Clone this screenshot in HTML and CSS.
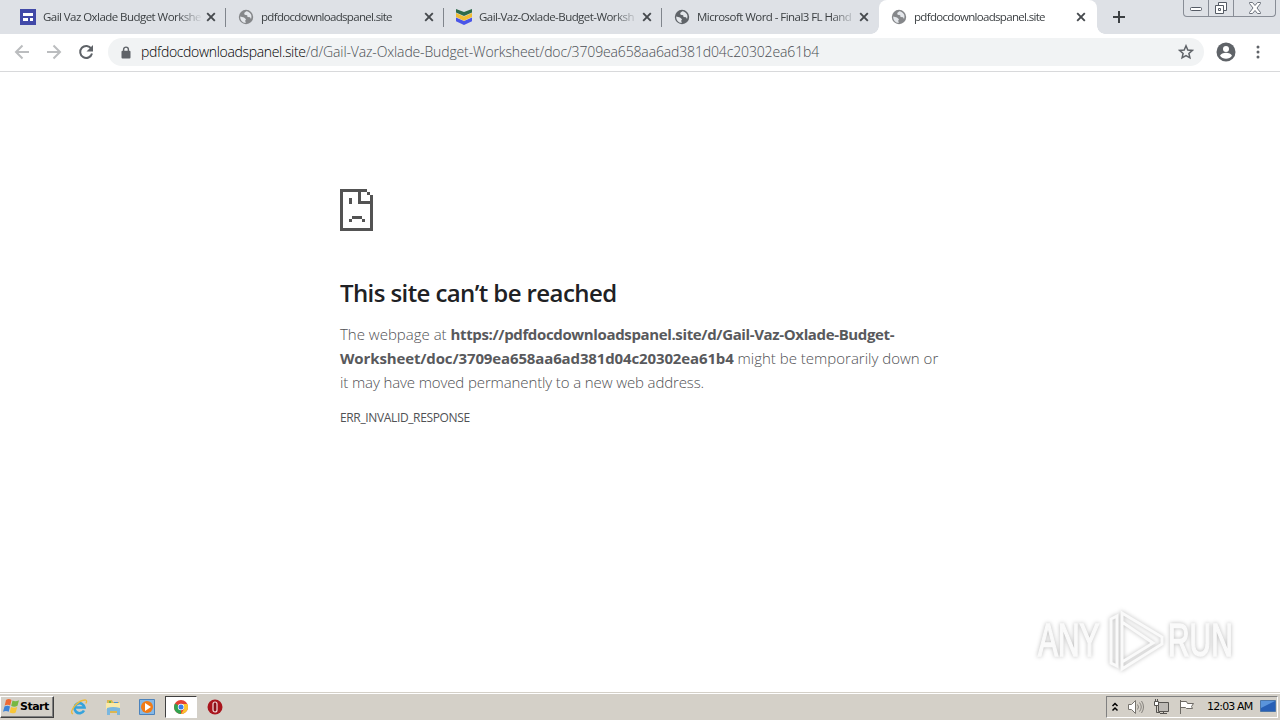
FILE: index.html
```
<!DOCTYPE html>
<html lang="en">
  <head>
    <meta charset="UTF-8">
    <title>pdfdocdownloadspanel.site</title>
    <link rel="stylesheet" href="styles.css">
  </head>
  <body>
    <svg class="defs" width="0" height="0">
      <symbol id="globe" viewBox="0 0 16 16">
        <circle cx="8" cy="8" r="7.200" fill="currentColor"/>
        <path d="M2.200 7.600 6 8.600l2 1.700-.8 1.500.6 2.200C4.300 14 2 11 2.200 7.600zM8.300 2.200 6.200 4l.4 1.700 2.600.5.3 1.800 2.500.3 1 1.700c1.600-3.800-.7-7.300-4.700-7.800z" fill="#e4e7eb"/>
      </symbol>
      <symbol id="close" viewBox="0 0 10 10">
        <path d="M1.200 1.200l7.600 7.600M8.800 1.200L1.200 8.800" fill="none" stroke="currentColor" stroke-width="1.900"/>
      </symbol>
    </svg>

    <header class="tab-strip">
      <div class="tab">
        <svg class="favicon" viewBox="0 0 16 16"><path fill="#4149a8" d="M0 0h16v16H0z"/><path fill="#fff" d="M3 4h10v3H3zM3 9h5v3H3zM10 9h3v3h-3z"/></svg>
        <span class="tab-title">Gail Vaz Oxlade Budget Workshe</span>
        <svg class="close"><use href="#close"/></svg>
      </div>
      <div class="tab">
        <svg class="favicon light"><use href="#globe"/></svg>
        <span class="tab-title site">pdfdocdownloadspanel.site</span>
        <svg class="close"><use href="#close"/></svg>
      </div>
      <div class="tab">
        <svg class="favicon" viewBox="0 0 16 16"><path fill="#4a55e8" d="M0 8.500l8 3.500 8-3.500v3.800L8 16l-8-3.700z"/><path fill="#f0bd35" d="M0 4l8 3.500L16 4v4l-8 3.700L0 8z"/><path fill="#2d6b4a" d="M0 0l8 3 8-3v3.500L8 7 0 3.500z"/></svg>
        <span class="tab-title">Gail-Vaz-Oxlade-Budget-Worksh</span>
        <svg class="close"><use href="#close"/></svg>
      </div>
      <div class="tab last">
        <svg class="favicon"><use href="#globe"/></svg>
        <span class="tab-title">Microsoft Word - Final3 FL Hand</span>
        <svg class="close"><use href="#close"/></svg>
      </div>
      <div class="tab active">
        <svg class="favicon light"><use href="#globe"/></svg>
        <span class="tab-title site">pdfdocdownloadspanel.site</span>
        <svg class="close"><use href="#close"/></svg>
      </div>
      <svg class="new-tab" viewBox="0 0 12 12"><path d="M6 0v12M0 6h12" stroke="#3c4043" stroke-width="2"/></svg>
      <div class="window-buttons">
        <span><svg width="14" height="8" viewBox="0 0 14 8"><rect x="1.500" y="3.500" width="11" height="3" rx="1" fill="#fff" stroke="#555b65"/></svg></span>
        <span><svg width="14" height="14" viewBox="0 0 14 14"><path d="M4.500 1.500h8v8h-8z" fill="#fff" stroke="#555b65"/><path d="M1.500 4.500h8v8h-8z" fill="#fff" stroke="#555b65"/><path d="M4.500 7.500h2v2h-2z" fill="none" stroke="#555b65"/></svg></span>
        <span class="wide"><svg width="12" height="12" viewBox="0 0 12 12"><path d="M.5.500h3L6 3.500 8.500.500h3v1L8 6l3.500 4.500v1h-3L6 8.500 3.500 11.500h-3v-1L4 6 .500 1.500z" fill="#fff" stroke="#6d737d"/></svg></span>
      </div>
    </header>

    <nav class="toolbar">
      <svg class="nav-icon dim" viewBox="0 0 16 16"><path d="M15 8H2.500M8.500 1.500L2 8l6.500 6.500"/></svg>
      <svg class="nav-icon dim" viewBox="0 0 16 16"><path d="M1 8h12.500M7.500 1.500L14 8l-6.500 6.500"/></svg>
      <svg class="nav-icon" viewBox="0 0 16 16"><path d="M13.300 4.800A6 6 0 1 0 14 9.500"/><path d="M15 1v6.500H8.500z" class="solid"/></svg>
      <div class="omnibox">
        <svg class="lock" viewBox="0 0 10 13"><path d="M2.600 6V3.500a2.400 2.400 0 0 1 4.800 0V6" fill="none" stroke="#5f6368" stroke-width="1.400"/><rect x=".5" y="4.800" width="9" height="7.700" rx="1" fill="#5f6368"/></svg>
        <span class="url"><b>pdfdocdownloadspanel.site</b>/d/Gail-Vaz-Oxlade-Budget-Worksheet/doc/3709ea658aa6ad381d04c20302ea61b4</span>
        <svg class="star" viewBox="0 0 16 16"><path d="M8 1.800l1.800 4.200 4.500.4-3.400 3 1 4.400L8 11.500l-3.900 2.300 1-4.400-3.400-3L6.200 6z" fill="none" stroke="#5f6368" stroke-width="1.500"/></svg>
      </div>
      <svg class="avatar" viewBox="0 0 20 20"><circle cx="10" cy="10" r="9.500" fill="#5f6368"/><circle cx="10" cy="7" r="3" fill="#fff"/><path d="M4 13.800c1.500-4 10.500-4 12 0-2.500 4-9.500 4-12 0z" fill="#fff"/></svg>
      <svg class="menu" viewBox="0 0 4 14"><circle cx="2" cy="2" r="1.500"/><circle cx="2" cy="7" r="1.500"/><circle cx="2" cy="12" r="1.500"/></svg>
    </nav>

    <main class="error-page">
      <svg class="sad-page" viewBox="0 0 33 42" shape-rendering="crispEdges">
        <path fill="#535353" d="M0 0h27v3H3v36h27V15H18V3h3v9h9V6h3v36H0zM27 3h3v3h-3zM9 9h3v6H9zM12 27h10v3H12zM9 30h3v3H9zM22 30h3v3h-3z"/>
      </svg>
      <h1>This site can’t be reached</h1>
      <p class="summary">
        <span class="line line-a">The webpage at <b>https://pdfdocdownloadspanel.site/d/Gail-Vaz-Oxlade-Budget-</b></span>
        <span class="line line-b"><b>Worksheet/doc/3709ea658aa6ad381d04c20302ea61b4</b> might be temporarily down or</span>
        <span class="line line-c">it may have moved permanently to a new web address.</span>
      </p>
      <p class="error-code">ERR_INVALID_RESPONSE</p>
    </main>

    <div class="watermark">
      <span>ANY</span>
      <svg viewBox="0 0 58 62"><path d="M15 3l40 24v7L15 59v-7l31-19L15 12zM15 3v49M4 9l6-3v50l-6-3z"/></svg>
      <span>RUN</span>
    </div>

    <footer class="taskbar">
      <div class="start">
        <svg width="17" height="17" viewBox="0 0 17 17"><path fill="#ee6a35" d="M3 2c2-1.500 4-1 5.500 0L7.200 7.500C5.500 6.300 3.500 6.500 1.700 7.500z"/><path fill="#77b843" d="M9.500 2.500c2 1 4 1 6.500-.3l-1.500 5.500c-2 1.200-4.300 1.200-6.300.2z"/><path fill="#3c83d8" d="M1.500 8.500c2-1 4-1 5.500 0l-1.300 5.300C4 12.800 2 12.800 0 13.800z"/><path fill="#f8c638" d="M8 9c2 1 4 1 6.200 0l-1.500 5.400c-2 1.100-4 1.100-6 .1z"/></svg>
        <span>Start</span>
      </div>
      <div class="launcher"><svg width="18" height="18" viewBox="0 0 18 18"><path d="M14 12.500A5 5 0 1 1 14.500 9.500H5" fill="none" stroke="#35a3dc" stroke-width="2.600"/><path d="M3 16C-2 14 8 2 15 2c2.500 0 1.500 2.500.8 3.500" fill="none" stroke="#edbb3c" stroke-width="1.300"/></svg></div>
      <div class="launcher"><svg width="18" height="18" viewBox="0 0 18 18"><path fill="#dcb651" d="M3 2h5l1 2h6v11H3z"/><path fill="#fae9a6" d="M2 5h14v6H2z"/><path fill="#69b648" d="M5 3h2v2H5z"/><path fill="#4d91d0" d="M10 4h4v1h-4z"/><path fill="#7ab7df" d="M3 10q6-2 13 0v7h-3v-4H6v4H3z"/></svg></div>
      <div class="launcher"><svg width="18" height="18" viewBox="0 0 18 18"><path fill="#85b8e6" stroke="#4c83bc" d="M1.500 1.500h15v15h-15z"/><circle cx="9" cy="9" r="6" fill="#f17b16"/><path fill="#fff" d="M7 5l6 4-6 4z"/></svg></div>
      <div class="launcher pressed"><svg width="14" height="14" viewBox="0 0 14 14"><circle cx="7" cy="7" r="7" fill="#e34133"/><path fill="#31a350" d="M1 3.500L7 7v7A7 7 0 0 1 1 3.500z"/><path fill="#fbc42d" d="M7 4h6.300A7 7 0 0 1 7 14l3-5z"/><circle cx="7" cy="7" r="3.200" fill="#fff"/><circle cx="7" cy="7" r="2.500" fill="#397be8"/></svg></div>
      <div class="launcher"><svg width="16" height="16" viewBox="0 0 16 16"><circle cx="8" cy="8" r="7.500" fill="#a9151d"/><rect x="6" y="3" width="4" height="10" rx="2" fill="#8a1018" stroke="#f4dcdc" stroke-width="1.200"/></svg></div>
      <div class="tray">
        <svg width="8" height="10" viewBox="0 0 8 10"><path d="M1.500 4L4 1.500 6.500 4M1.500 8.500L4 6l2.500 2.500" fill="none" stroke="#000" stroke-width="1.500"/></svg>
        <svg width="18" height="16" viewBox="0 0 18 16"><path d="M1.500 5.500h3l4-4v13l-4-4h-3z" fill="#fff" stroke="#77746e"/><path d="M10.500 5.500q2 2.500 0 5M12.500 3.500q3.500 4.500 0 9M14.500 2q4 6 0 12" fill="none" stroke="#85827c"/></svg>
        <svg width="17" height="16" viewBox="0 0 17 16"><path d="M5.500 3.500h10v9h-10z" fill="#bdbab5" stroke="#55534f"/><path d="M7 14.500h7M10.500 13v2M3.500 7v6.500H7" fill="none" stroke="#55534f"/><path d="M1.500 2.500h4v4h-4zM2.500 0v2M4.500 0v2" fill="#fff" stroke="#55534f"/></svg>
        <svg width="17" height="16" viewBox="0 0 17 16"><path d="M2.500 1v14M2.500 2.500h6l1 2h6l-2 3 1 2H8.500l-1-1h-5z" fill="#fff" stroke="#6d6a65"/></svg>
        <span class="clock">12:03 AM</span>
        <svg class="desktop" width="16" height="13" viewBox="0 0 16 13"><path d="M.5.500h15v11H.5z" fill="#2860b6" stroke="#4c76a8"/><path d="M1 1h14L1 8z" fill="#5a94db"/></svg>
      </div>
    </footer>
  </body>
</html>
```
FILE: styles.css
```
* {
  box-sizing: border-box;
}

body {
  margin: 0;
  width: 1280px;
  height: 720px;
  display: flex;
  flex-direction: column;
  overflow: hidden;
  background-color: #fff;
  font-family: "Open Sans", "Noto Sans", sans-serif;
}

svg {
  display: block;
  flex: none;
}

.defs {
  position: absolute;
}

.tab-strip {
  display: flex;
  height: 34px;
  padding-left: 8px;
  background-color: #dee1e6;
}

.tab {
  display: flex;
  align-items: center;
  width: 218px;
  height: 34px;
  padding: 0 10px 0 12px;
  color: #5f6368;
  background: linear-gradient(#80858c, #80858c) right 8px / 1px 19px no-repeat;
}

.tab.last {
  width: 217px;
  background: none;
}

.tab.active {
  position: relative;
  background: #fff;
  border-radius: 8px 8px 0 0;
}

/* curved feet of the selected tab */
.tab.active::before,
.tab.active::after {
  content: "";
  position: absolute;
  bottom: 0;
  width: 8px;
  height: 8px;
}

.tab.active::before {
  left: -8px;
  background: radial-gradient(circle at 0 0, #dee1e6 7.5px, #fff 8px);
}

.tab.active::after {
  right: -8px;
  background: radial-gradient(circle at 100% 0, #dee1e6 7.5px, #fff 8px);
}

.favicon {
  width: 16px;
  height: 16px;
  margin-right: 7px;
}

.favicon.light {
  color: #85878a;
}

.tab-title {
  width: 158px;
  white-space: nowrap;
  font-size: 11.5px;
  line-height: 18px;
  letter-spacing: -0.55px;
  color: #3c4043;
  -webkit-mask-image: linear-gradient(90deg, #000 134px, transparent 160px);
}

.tab-title.site {
  letter-spacing: -0.68px;
}

.close {
  width: 10px;
  height: 10px;
  margin-left: 5px;
  color: #45494d;
}

.tab.last .close,
.tab.active .close {
  margin-left: 4px;
}

.new-tab {
  width: 12px;
  height: 12px;
  margin: 11px 0 0 16px;
}

.window-buttons {
  display: flex;
  width: 93px;
  height: 17px;
  margin-left: 58px;
  border: 1px solid #888d96;
  border-top: 0;
  border-radius: 0 0 4px 4px;
}

.window-buttons span {
  display: flex;
  align-items: center;
  justify-content: center;
  width: 25px;
  border-right: 1px solid #888d96;
}

.window-buttons .wide {
  width: 41px;
  border-right: 0;
}

.toolbar {
  display: flex;
  align-items: center;
  height: 38px;
  padding: 0 20px 1px 14px;
  border-bottom: 1px solid #d8d9db;
}

.nav-icon {
  width: 16px;
  height: 16px;
  margin-right: 16px;
  fill: none;
  stroke: #5f6368;
  stroke-width: 2;
}

.nav-icon:nth-child(3) {
  margin-right: 14px;
}

.nav-icon.dim {
  stroke: #bbbdbf;
}

.nav-icon .solid {
  fill: #5f6368;
  stroke: none;
}

.omnibox {
  display: flex;
  align-items: center;
  width: 1096px;
  height: 28px;
  padding: 0 10px 0 13px;
  border-radius: 14px;
  background-color: #f1f3f4;
}

.lock {
  width: 10px;
  height: 13px;
  margin-right: 10px;
}

.url {
  flex: 1;
  padding-bottom: 2px;
  white-space: nowrap;
  font-size: 14px;
  font-weight: 300;
  letter-spacing: -0.14px;
  color: #4a4e53;
}

.url b {
  font-weight: 300;
  letter-spacing: -0.33px;
  color: #000;
}

.star {
  width: 16px;
  height: 16px;
}

.avatar {
  width: 20px;
  height: 20px;
  margin-left: 12px;
}

.menu {
  width: 4px;
  height: 14px;
  margin-left: 20px;
  fill: #5f6368;
}

.error-page {
  flex: 1;
  width: 600px;
  margin-left: 340px;
  padding-top: 117px;
  color: #505154;
}

.sad-page {
  width: 33px;
  height: 42px;
}

h1 {
  margin: 46px 0 0;
  font-size: 24px;
  line-height: 31px;
  font-weight: 600;
  letter-spacing: -0.59px;
  color: #202124;
}

.summary {
  margin: 14px 0 0;
  font-size: 15px;
  font-weight: 300;
  line-height: 24px;
}

.line {
  display: block;
  white-space: nowrap;
}

.line b {
  font-weight: 700;
  color: #58595c;
}

.line-a b {
  letter-spacing: -0.36px;
}

.line-b b {
  letter-spacing: -0.13px;
}

.line-c {
  letter-spacing: -0.12px;
}

.error-code {
  margin: 14px 0 0;
  font-size: 12px;
  line-height: 20px;
  letter-spacing: -0.36px;
}

.watermark {
  position: absolute;
  left: 1038px;
  top: 609px;
  display: flex;
  align-items: center;
  width: 198px;
  height: 63px;
  filter: drop-shadow(0 0 2px #bbb);
}

.watermark span {
  width: 66px;
  font-family: "Liberation Sans", sans-serif;
  font-size: 46px;
  line-height: 63px;
  color: #fafafa;
  -webkit-text-stroke: 1.5px #fafafa;
  transform: scaleX(0.65);
  transform-origin: left;
}

.watermark svg {
  width: 58px;
  height: 62px;
  margin: 0 3px 0 3px;
  fill: none;
  stroke: #fafafa;
  stroke-width: 3;
}

.taskbar {
  display: flex;
  align-items: center;
  height: 28px;
  padding: 1px 2px 1px 0;
  border-top: 1px solid #d4d0c8;
  background-color: #d4d0c8;
  box-shadow: inset 0 1px #fff;
}

.start {
  display: flex;
  align-items: center;
  width: 54px;
  height: 22px;
  margin-right: 9px;
  padding-left: 2px;
  border: 1px solid;
  border-color: #fff #404040 #404040 #fff;
  box-shadow: inset -1px -1px #808080;
  font-family: "DejaVu Sans", sans-serif;
  font-size: 11px;
  font-weight: 700;
  letter-spacing: -0.5px;
}

.launcher {
  display: flex;
  align-items: center;
  justify-content: center;
  width: 32px;
  height: 22px;
  margin-right: 2px;
}

.launcher.pressed {
  border: 1px solid;
  border-color: #404040 #fff #fff #404040;
  background-color: #fff;
}

.tray {
  display: flex;
  align-items: center;
  gap: 8px;
  width: 172px;
  height: 22px;
  margin-left: auto;
  padding-left: 4px;
  border: 1px solid;
  border-color: #808080 #fff #fff #808080;
}

.clock {
  width: 46px;
  margin-left: 4px;
  white-space: nowrap;
  font-family: "DejaVu Sans", sans-serif;
  font-size: 11px;
  letter-spacing: -0.85px;
}

.desktop {
  margin-left: -1px;
}
```
